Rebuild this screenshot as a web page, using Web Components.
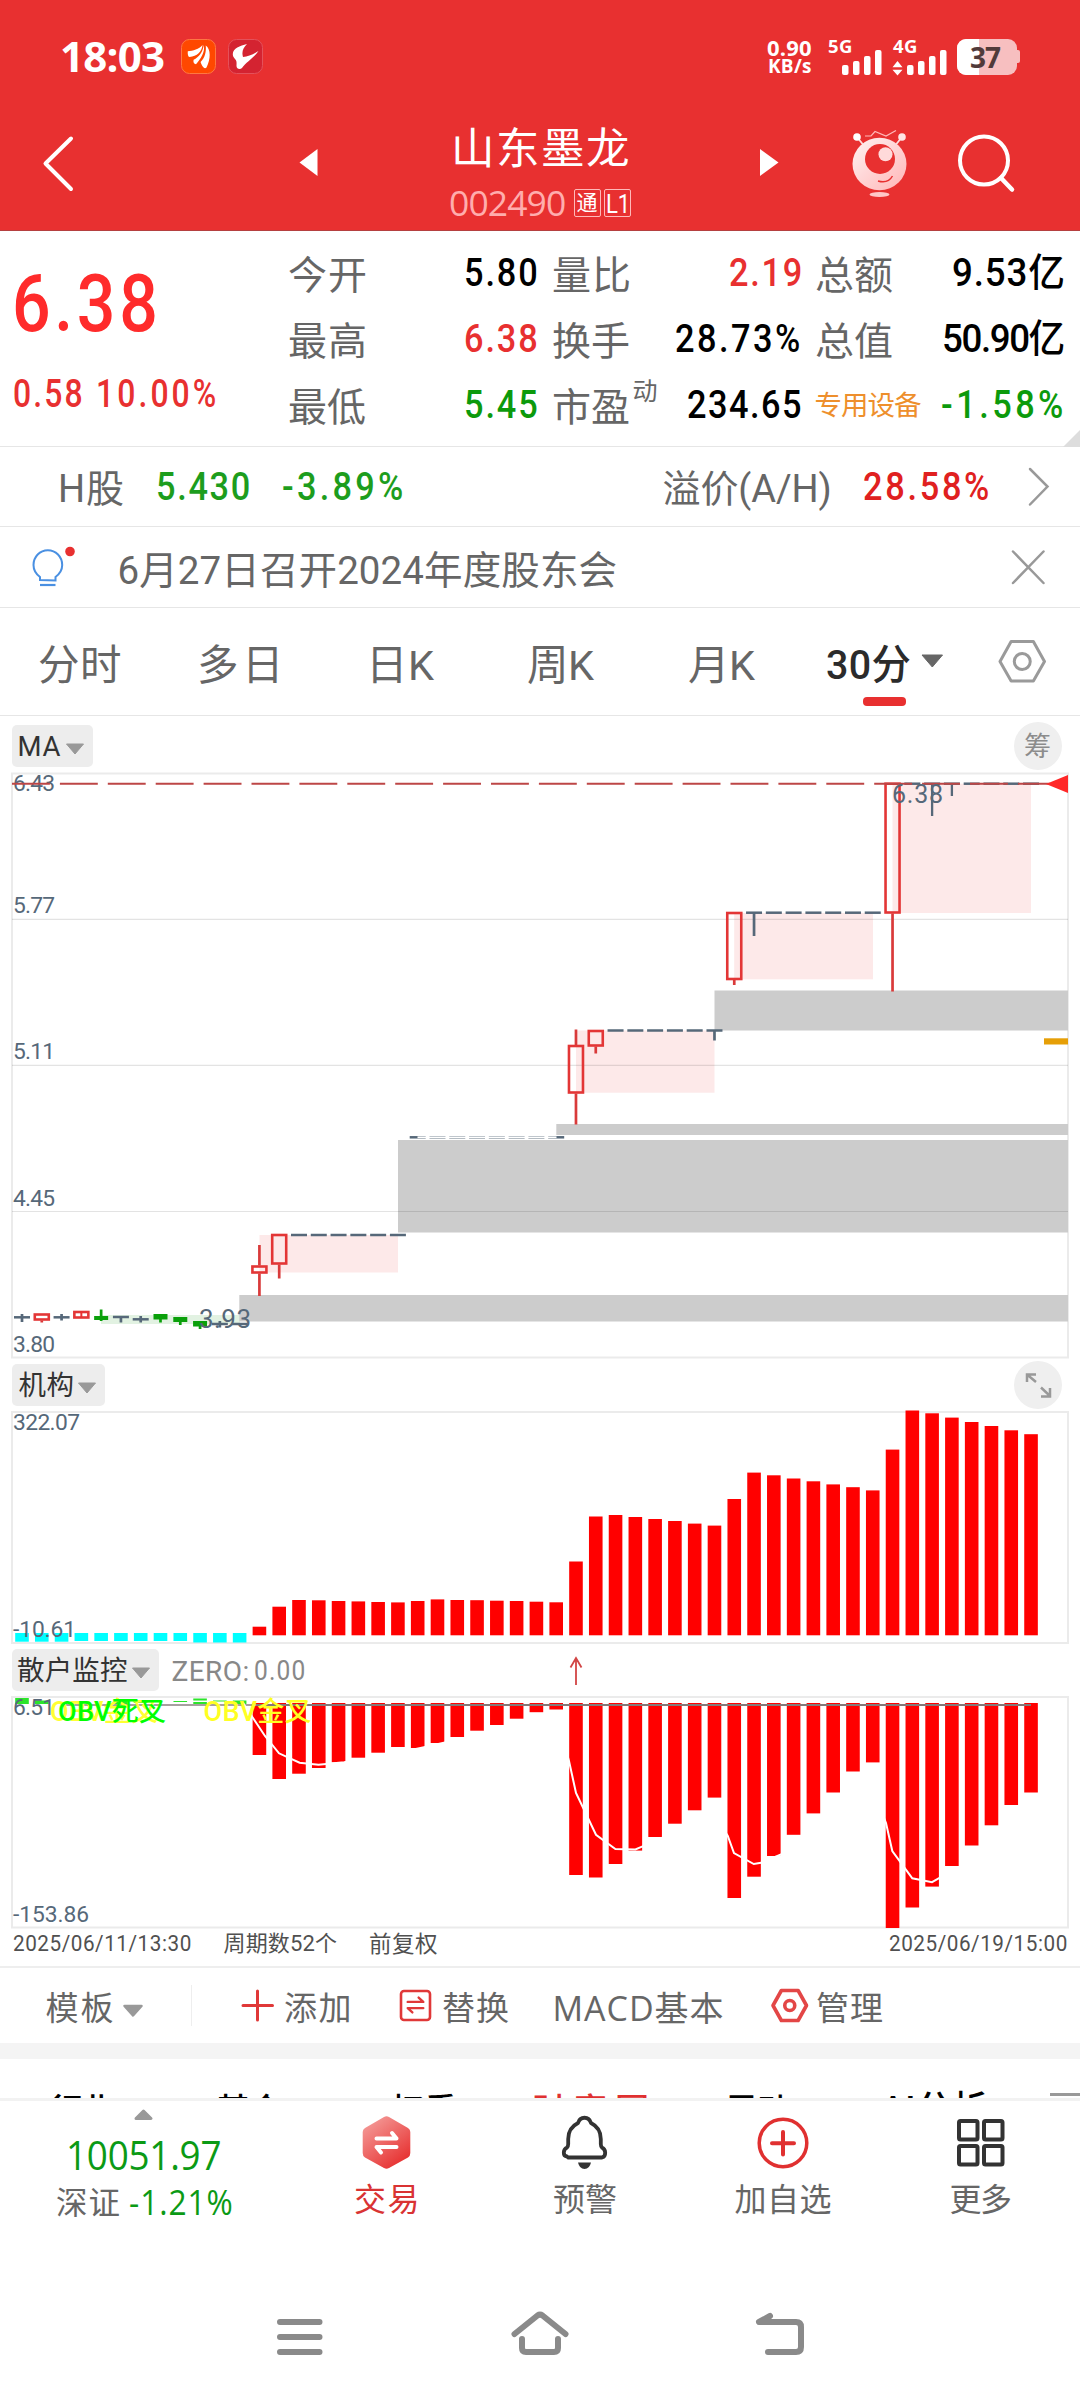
<!DOCTYPE html>
<html lang="zh-CN">
<head>
<meta charset="utf-8">
<title>山东墨龙 002490</title>
<style>
html,body{margin:0;padding:0;background:#fff}
body{width:1080px;height:2400px;overflow:hidden;font-family:Roboto,"Noto Sans CJK SC",sans-serif;color:#666}
</style>
</head>
<body>
<stock-page></stock-page>
<script>
const pen = document.createElement('canvas').getContext('2d');

/* Text whose ink spans exactly the width given in "w"; --k condenses the glyphs. */
class FitText extends HTMLElement {
  connectedCallback() {
    if (this.shadowRoot) return;
    const root = this.attachShadow({ mode: 'open' });
    root.innerHTML = '<style>:host{display:block;white-space:pre;flex:none}span{display:inline-block;transform-origin:0 50%}</style><span><slot></slot></span>';
    const text = this.textContent, w = +this.getAttribute('w');
    const cs = getComputedStyle(this);
    const k = parseFloat(cs.getPropertyValue('--k')) || 1;
    pen.font = `${cs.fontWeight} ${cs.fontSize} ${cs.fontFamily}`;
    const m = pen.measureText(text), n = [...text].length;
    const ink = m.actualBoundingBoxLeft + m.actualBoundingBoxRight;
    const span = root.querySelector('span');
    span.style.marginLeft = m.actualBoundingBoxLeft * k + 'px';
    if (k !== 1) span.style.transform = `scaleX(${k})`;
    if (n > 1) span.style.letterSpacing = ((w / k - ink) / (n - 1)) + 'px';
  }
}
customElements.define('fit-text', FitText);

/* Items of a row: left edge, width, centre, height, markup. */
const OPEN = "'Open Sans','Noto Sans CJK SC',sans-serif";
const t = (x, w, cy, size, text, css = '') => ({ x, w, cy, h: size, html: text, size, css, text: true });
const g = (x, y, w, h, inner, css = '') => ({ x, w, cy: y + h / 2, h, css,
  html: `<svg width="${w}" height="${h}" viewBox="${x} ${y} ${w} ${h}" fill="none">${inner}</svg>` });
const b = (x, y, w, h, html, css = '') => ({ x, w, cy: y + h / 2, h, html, css });
function row(top, height, items, css = '', left = 0) {
  let end = left;
  return `<div class="row" style="height:${height}px;${css}">` + items.map(i => {
    const box = `margin:${i.cy - i.h / 2 - top}px 0 0 ${i.x - end}px;width:${i.w}px;height:${i.h}px;`;
    end = i.x + i.w;
    return i.text
      ? `<fit-text w="${i.w}" style="${box}font-size:${i.size}px;line-height:${i.h}px;${i.css}">${i.html}</fit-text>`
      : `<div class="box" style="${box}${i.css}">${i.html}</div>`;
  }).join('') + '</div>';
}
const BASE = '<style>:host{display:block;flex:none}*{box-sizing:border-box}.row{display:flex;align-items:flex-start;width:100%}.box{flex:none}svg{display:block;overflow:visible}</style>';
function define(name, markup) {
  customElements.define(name, class extends HTMLElement {
    connectedCallback() {
      if (this.shadowRoot) return;
      this.attachShadow({ mode: 'open' }).innerHTML = BASE + markup;
    }
  });
}
const bars = x => [[0, 65], [11, 61], [22, 56], [33, 50]].map(([d, y]) =>
  `<rect x="${x + d}" y="${y}" width="6.5" height="${75 - y}" rx="2" fill="#fff"/>`).join('');
const B = 'color:#fff;font-weight:700;font-family:' + OPEN;

define('status-bar', '<style>:host{background:#e83030}</style>' + row(0, 100, [
  t(62, 102, 56, 42, '18:03', B),
  g(181, 39, 35, 35, '<g transform="translate(181 39)"><rect x=".5" y=".5" width="34" height="34" rx="8" fill="#ff4800" stroke="#ff7742"/><g fill="#fff"><path d="M6.8 12.2C12 12 18 10 21.5 6 21 12.500 16 17.500 8.500 18 7 17.800 6.500 15 6.800 12.200Z"/><path d="M22.700 6C24.500 13 19.500 20 15 25.200 12.800 25.200 12 23 12.600 20.800 18 18 22 13 22.700 6Z"/><path d="M24.700 6.500C30 10 29.800 20 25.500 28.500 23 31 20.500 26 19.600 23 24 19 25.500 12 24.700 6.500Z"/></g></g>'),
  g(228, 39, 35, 35, '<g transform="translate(228 39)"><rect x=".5" y=".5" width="34" height="34" rx="8" fill="#d42331" stroke="#e4515b"/><path fill="#fff" d="M4.800 15C5 9 12 7 19 5 15 9 13.500 13 15 18 20 18 26 15 30.500 12 26 19 18 23 14 29 12 31 8.500 30 8.500 27 8.500 24 9 22 7 20 5.500 18.500 4.700 17 4.800 15Z"/></g>'),
  b(767, 36, 44, 42, row(36, 22, [t(767, 44, 46.500, 22, '0.90', B)], '', 767) + row(58, 20, [t(769, 42, 66.500, 19, 'KB/s', B)], '', 767)),
  t(828, 23, 46, 18.500, '5G', B),
  g(852, 39, 31, 36, bars(842)),
  t(893, 23, 46, 18.500, '4G', B),
  g(917, 39, 30, 36, bars(907) + '<path d="M892.500 67.300 897.500 61 902.500 67.300ZM892.500 69.700 897.500 75.500 902.500 69.700Z" fill="#fff"/>'),
  g(957, 39, 13, 36, '<rect x="957" y="39" width="60" height="36" rx="9" fill="#f7bfc0"/><path d="M979 39H966A9 9 0 0 0 957 48V66A9 9 0 0 0 966 75H979Z" fill="#fff"/><path d="M1017 50h1a2 2 0 0 1 2 2v9a2 2 0 0 1-2 2h-1Z" fill="#f7bfc0"/>'),
  t(971, 30, 56.500, 28, '37', B + ';color:#513a3a;position:relative'),
]));

define('title-bar', '<style>:host{background:#e83030;border-bottom:1px solid #b54040}</style>' + row(100, 130, [
  g(40, 133, 36, 60, '<path d="M71 138.500 45.500 163.500 71 189" stroke="#fff" stroke-width="4" stroke-linecap="round" stroke-linejoin="round"/>'),
  g(299, 148, 20, 30, '<path d="M299.500 162.500 317.500 149V176Z" fill="#fff"/>'),
  b(449, 124, 181, 94,
    row(124, 60, [t(455, 173, 149.500, 43.500, '山东墨龙', 'color:#fff')], '', 449) +
    row(184, 34, [
      t(450, 115, 202.500, 35.500, '002490', 'color:#ffadad;font-family:' + OPEN),
      b(573.500, 189, 27, 28, row(190, 26, [t(576.500, 20.500, 203.500, 21, '通', 'color:#fff')], '', 574.500), 'border:1px solid #ffb9b9;border-radius:2px'),
      b(603.500, 189, 27, 28, row(190, 26, [t(607.500, 18.500, 203.500, 26, 'L1', 'color:#fff;--k:.85')], '', 604.500), 'border:1px solid #ffb9b9;border-radius:2px')
    ], '', 449)),
  g(759, 148, 20, 30, '<path d="M778.500 162.500 760 149V176Z" fill="#fff"/>'),
  g(850, 128, 58, 70, '<defs><linearGradient id="r" x1="0" y1="0" x2="1" y2="1"><stop offset="0" stop-color="#fff3f3"/><stop offset="1" stop-color="#ffb5b6"/></linearGradient></defs><path d="M857 137 865 147M902 137 894 147" stroke="#ffdede" stroke-width="1.800"/><circle cx="857" cy="137" r="3.800" fill="#fff"/><circle cx="902" cy="137" r="3.800" fill="#ffe5e5"/><path d="M865 136H871L875 131.500 886 136 896 130.500" stroke="#ffb9b9" stroke-width="1.200"/><ellipse cx="879.500" cy="164" rx="27" ry="26.300" fill="url(#r)"/><circle cx="880" cy="159" r="15" fill="#e83030"/><circle cx="885.500" cy="154.300" r="7" fill="#ffdada"/><path d="M878 181Q888 184 892.500 176" stroke="#e83030" stroke-width="1.500"/><ellipse cx="879.500" cy="194.500" rx="10" ry="2.500" fill="#ffc7c7"/>'),
  g(956, 132, 60, 62, '<ellipse cx="984" cy="160.500" rx="24" ry="24" stroke="#fff" stroke-width="4"/><path d="M1001 178 1012 189.500" stroke="#fff" stroke-width="4.500" stroke-linecap="round"/>')
]));

const R = '#e83030', K = '#000', G = '#0c9a0c';
const v = (x, w, cy, s, c) => t(x, w, cy + 1.500, 39, s, `font-weight:500;color:${c};--k:${s.endsWith('亿') ? .94 : .88}`);
const lab = (x, cy, s) => t(x, 76, cy + 3.500, 39, s);
define('quote-panel', '<style>:host{border-bottom:1px solid #e6e6e6;display:flex;background:#fff}.l{width:280px}.r{width:800px}</style><div class="l">' +
  row(231, 120, [t(15.500, 139, 304.500, 79, '6.38', 'font-weight:500;color:#ff2b2b;--k:.86')]) +
  row(351, 95, [t(13.500, 67.500, 393.500, 38, '0.58', 'font-weight:500;--k:.84;color:' + R), t(98.500, 117, 393.500, 38, '10.00%', 'font-weight:500;--k:.84;color:' + R)]) +
  '</div><div class="r">' +
  row(231, 75, [lab(289, 272.500, '今开'), v(466, 71, 272, '5.80', K), lab(553, 272.500, '量比'), v(729.500, 70.500, 272, '2.19', R), lab(816, 272.500, '总额'), v(953, 110, 272, '9.53亿', K)], '', 280) +
  row(306, 65, [lab(289, 338.500, '最高'), v(466, 71, 338, '6.38', R), lab(553, 338.500, '换手'), v(675.500, 123, 338, '28.73%', K), lab(816, 338.500, '总值'), v(943.500, 119.500, 338, '50.90亿', K)], '', 280) +
  row(371, 75, [lab(289, 404.500, '最低'), v(466, 71, 404, '5.45', G), lab(553, 404.500, '市盈'), t(633.500, 24, 391.500, 25, '动'), v(687.500, 112.500, 404, '234.65', K), t(815.500, 105.500, 406, 27.500, '专用设备', 'color:#ee8f2c'), v(941.500, 120, 404, '-1.58%', G), g(1063, 430, 17, 17, '<path d="M1063 447 1080 430V447Z" fill="#ddd"/>')], '', 280) + '</div>');

define('h-share-row', '<style>:host{border-bottom:1px solid #e6e6e6}</style>' + row(447, 79, [
  t(61, 62, 488.500, 38, 'H股'), v(157.500, 91.500, 485.500, '5.430', '#1d9d1d'), v(283, 119, 485.500, '-3.89%', '#1d9d1d'),
  t(663.500, 166, 488.500, 38, '溢价(A/H)'), v(864, 124, 485.500, '28.58%', '#e02020'),
  g(1027, 466, 24, 42, '<path d="M1030 469 1047.500 486.500 1030 504.500" stroke="#999" stroke-width="2.500" stroke-linecap="round"/>')
]));

define('notice-row', '<style>:host{border-bottom:1px solid #e6e6e6}</style>' + row(527, 80, [
  g(30, 544, 48, 46, '<path d="M40 580V577C36 574 33.500 569 33.500 565A14.300 14.800 0 0 1 62.200 565C62.200 569 59.500 574 55.500 577V580.500Z" stroke="#4a90e2" stroke-width="2"/><path d="M40 585H55.500" stroke="#4a90e2" stroke-width="2.200"/><circle cx="70" cy="551.500" r="4.800" fill="#e83030"/>'),
  t(119.500, 497, 571, 38.500, '6月27日召开2024年度股东会'),
  g(1010, 549, 36, 36, '<path d="M1013 551.500 1043.500 583M1043.500 551.500 1013 583" stroke="#999" stroke-width="2.500" stroke-linecap="round"/>')
]));

const hex = (x1, x2, y1, y2, cy, r, c, sw) => { const k = (x2 - x1) / 4; return `<path d="M${x1 + k} ${y1}H${x2 - k}L${x2} ${cy} ${x2 - k} ${y2}H${x1 + k}L${x1} ${cy}Z" stroke="${c}" stroke-width="${sw}" stroke-linejoin="round"/><circle cx="${(x1 + x2) / 2}" cy="${cy}" r="${r}" stroke="${c}" stroke-width="${sw}"/>`; };
define('period-tabs', '<style>:host{border-bottom:1px solid #e6e6e6}</style>' + row(608, 107, [
  t(39, 81, 665.500, 41.500, '分时'), t(200, 77, 665.500, 41.500, '多日'), t(373, 62, 665.500, 41.500, '日K'), t(528, 67, 665.500, 41.500, '周K'), t(689, 67, 665.500, 41.500, '月K'),
  b(826, 640, 85, 70, row(640, 57, [t(826.500, 83, 665.500, 41, '30分', 'color:#2b2b2b;font-weight:500;--k:.96')], '', 826) + row(697, 13, [b(863, 697, 43, 9, '', 'background:#e83030;border-radius:4px')], '', 826)),
  g(921, 654, 23, 15, '<path d="M922 655H942.500L932.300 667Z" fill="#666" stroke="#666" stroke-linejoin="round"/>'),
  g(998, 638, 48, 46, hex(1000, 1044.500, 641.500, 681, 661.500, 8, '#9a9a9a', 3))
]));

const chip = (y, w, x, tw, text) => b(12, y, w, 42, row(y, 42, [t(x, tw, y + 22, 27.500, text, 'color:#333'), g(x + tw + 4, y + 18, 19, 12, `<path d="M${x + tw + 5.500} ${y + 19}h17l-8.500 10Z" fill="#999" stroke="#999" stroke-linejoin="round"/>`)], '', 12), 'background:#ededed;border-radius:5px');
const round = (y, inner) => b(1014, y, 48, 48, inner, 'background:#efefef;border-radius:50%');
define('main-head', row(716, 56, [chip(725, 81, 19.500, 41, 'MA'), round(722, row(722, 48, [t(1025, 26, 747, 27, '筹', 'color:#8c8c8c')], '', 1014))]));
define('fund-head', row(1359, 52, [chip(1364, 93, 18.500, 54, '机构'), round(1361, '<svg width="48" height="48" viewBox="1014 1361 48 48"><path d="M1036 1382 1027 1374.500M1027 1382V1374.500H1036M1041 1387.500 1050 1396M1041 1396.500H1050V1388" fill="none" stroke="#999" stroke-width="2.500"/></svg>')]));
define('retail-head', row(1644, 52, [chip(1649, 147, 18, 109, '散户监控'),
  t(172.500, 75, 1671.500, 28, 'ZERO:', 'color:#888'), t(254.500, 49.500, 1671.500, 28.500, '0.00', 'color:#888;--k:.86'),
  g(569, 1654, 14, 33, '<path d="M576 1685V1658M570.500 1667.500 576 1658 581.500 1667.500" stroke="#d24545" stroke-width="1.800"/>')]));

/* Chart pieces, in page units. */
const X = i => 22 + 19.785 * i, INK = '#566879', SW = 2.700;
const rect = (x, y, x2, y2, f) => `<rect x="${x}" y="${y}" width="${x2 - x}" height="${y2 - y}" fill="${f}"/>`;
const label = (x, base, w, s, size = 22.800, c = INK) => `<text x="${x}" y="${base}" textLength="${w}" font-size="${size}" fill="${c}">${s}</text>`;
const line = (x, y, x2, y2, c, w = 2) => `<path d="M${x} ${y}L${x2} ${y2}" stroke="${c}" stroke-width="${w}"/>`;
const doji = (i, y, a = y, z = y) => line(X(i) - 8, y, X(i) + 8, y, INK, 2.500) + (a < z ? line(X(i), a, X(i), z, INK, SW) : '');
const up = (i, a, z, hi = a, lo = z) => line(X(i), hi, X(i), a, '#d93a3a', SW) + line(X(i), z, X(i), lo, '#d93a3a', SW) + `<rect x="${X(i) - 7}" y="${a + 1}" width="14" height="${z - a - 2}" stroke="#e33636" stroke-width="2.600"/>`;
const down = (i, a, z, hi, lo) => rect(X(i) - 7, a, X(i) + 7, z, '#0aa00a') + line(X(i), hi, X(i), lo, '#0aa00a', SW);
const frame = (y, y2) => `<rect x="12" y="${y}" width="1056" height="${y2 - y}" stroke="#ebebeb" stroke-width="2"/>`;
const dojis = (a, z, y) => { let s = ''; for (let i = a; i <= z; i++) s += doji(i, y); return s; };
const chart = (y, h, inner) => `<svg width="1080" height="${h}" viewBox="0 ${y} 1080 ${h}" fill="none" font-family="Roboto,'Noto Sans CJK SC',sans-serif">${inner}</svg>`;

define('candle-chart', chart(772, 587, frame(773.500, 1357.500) +
  rect(101, 1315, 240, 1324, '#e2f2e2') + rect(239.300, 1295, 1068, 1321.500, '#ccc') + rect(398, 1140, 1068, 1232.500, '#ccc') +
  rect(556.300, 1124, 1068, 1135, '#ccc') + rect(714.500, 990.500, 1068, 1030.500, '#ccc') +
  rect(259.500, 1235, 398, 1272.500, '#fde9e9') + rect(576, 1030.500, 714.500, 1092.700, '#fde9e9') +
  rect(734.200, 913, 873, 979.300, '#fde9e9') + rect(892.500, 783.700, 1031, 913, '#fde9e9') +
  [919.300, 1065.300, 1211.500].map(y => line(12, y, 1068, y, 'rgba(0,0,0,.11)', 1.200)).join('') +
  label(13, 791, 42, '6.43') + label(13, 912.500, 42, '5.77') + label(13, 1059, 42, '5.11') + label(13, 1205.500, 42, '4.45') + label(13, 1351.500, 42, '3.80') +
  doji(0, 1317.300, 1314, 1322) + up(1, 1313.500, 1320.500, 1313.500, 1322.500) + doji(2, 1317.300, 1314, 1320.500) + up(3, 1311, 1318.500) + line(X(3), 1311, X(3), 1318, '#e83030') +
  down(4, 1316, 1320, 1309.500, 1321) + doji(5, 1317, 1317, 1322.500) + doji(6, 1319.300, 1316, 1322.500) + down(7, 1314, 1319.500, 1314, 1322.500) +
  down(8, 1317, 1322, 1317, 1325) + down(9, 1321, 1326.500, 1321, 1329) + doji(10, 1324, 1321, 1327.500) + doji(11, 1324) + label(199, 1327.500, 52, '3.93', 26) +
  up(12, 1265.500, 1273.500, 1245, 1296) + up(13, 1234, 1264.500, 1234, 1278.500) + dojis(14, 19, 1235) +
  dojis(20, 27, 1137.300) + rect(417.500, 1136.400, 556.500, 1138.200, '#fff') +
  up(28, 1045, 1093.500, 1029.500, 1124.500) + up(29, 1030, 1046.500, 1030, 1053.500) + dojis(30, 34, 1030.500) + doji(35, 1030.500, 1030.500, 1040.500) +
  up(36, 912, 980, 912, 985) + doji(37, 912.700, 912.700, 936) + dojis(38, 43, 912.700) +
  up(44, 782.700, 913.500, 782.700, 991.500) + dojis(45, 51, 783.700) + line(X(46), 783, X(46), 816, INK, 2.300) + line(X(47), 783, X(47), 796, INK, 2.300) +
  '<path d="M12 783.700H1050" stroke="#bd4646" stroke-width="2" stroke-dasharray="37.900 10"/>' +
  label(892, 802.700, 51, '6.38', 25) + '<path d="M1046 784 1068 775V793Z" fill="#ff2828"/>' + rect(1044, 1038.300, 1068, 1044.500, '#e69f07')));

const flow = [1626.700,1606.700,1600,1600.300,1601,1601.400,1602,1602.400,1601,1599.400,1600,1600.200,1600.700,1601,1601.700,1602.300,1561.500,1516.500,1515,1517,1519,1521,1523.600,1525.600,1499,1472.600,1475.300,1478.500,1481.300,1484.400,1487.200,1490.400,1449.600,1410.500,1413.300,1417.600,1422,1426,1430.300,1434.200];
const retail = [1755,1779,1773.700,1768,1762.300,1757.700,1752.700,1747,1748,1743,1737,1730.700,1725,1718.700,1712.200,1709.500,1875,1877.500,1864,1850.600,1837,1823.700,1810.300,1797.600,1898,1876.700,1856,1834.800,1813.400,1792.500,1771.500,1762.400,1928,1907.500,1886.600,1866,1845.500,1825.300,1805,1792.500];
const bar = (i, a, z, c) => rect(X(i) - 6.800, a, X(i) + 6.800, z, c);
const cyan = Array.from({ length: 12 }, (_, i) => bar(i, 1633, i > 8 ? 1642.500 : i < 3 ? 1641.700 : 1641, '#0ff')).join('');
define('fund-chart', chart(1411, 233, frame(1412, 1643) + cyan + flow.map((y, i) => bar(i + 12, y, 1635.300, '#f00')).join('') +
  label(13, 1430, 67, '322.07') + label(13, 1636.700, 63, '-10.61')));
const obv = (x, s, c) => `<text x="${x}" y="1720.500" textLength="108" font-size="27" font-weight="500" fill="${c}">${s}</text>`;
define('retail-chart', chart(1696, 233, frame(1697, 1927.500) +
  [[0,1698,1704],[1,1700.500,1704],[3,1701,1702],[5,1700,1704],[6,1701,1703],[8,1701,1702],[9,1698.500,1700.500],[9,1702,1704],[10,1700.500,1701.500],[11,1700.500,1704]].map(([i, a, z]) => bar(i, a, z, '#2be52b')).join('') +
  line(66, 1705, 1031, 1705, '#8a8080', 1.600) + obv(50, 'OBV金叉', '#ff3') +
  retail.map((y, i) => bar(i + 12, 1703, y, '#f00')).join('') + line(253, 1705, 1031, 1705, '#857777', 2) +
  '<path d="M243 1703 253 1718 265 1736 279 1753.300 299.600 1762.700 318.500 1764.700 344 1762.300 378 1757 424 1747.300 500 1730 556 1713 569 1761 576 1793 596 1834.800 615.400 1849 635.400 1849.400 642 1846.600 714 1815 727.700 1835.600 734 1853 753.800 1864 761 1862.800 781 1854.500 873 1790 886 1823 892.300 1851 912.300 1878.300 932 1882.200 939.500 1878 960 1868" stroke="#fff" stroke-width="2"/>' +
  label(13, 1715, 42, '6.51') + obv(58, 'OBV死叉', '#0f0') + obv(203.500, 'OBV金叉', '#ff2') + label(13, 1922, 76, '-153.86')));

const D = 'color:#505050';
define('date-row', row(1929, 37, [t(13.500, 177, 1944, 22, '2025/06/11/13:30', D + ';--k:.94'), t(223.500, 113.500, 1944, 22, '周期数52个', D), t(370, 67, 1944, 22.500, '前复权', D), t(889.500, 177, 1944, 22, '2025/06/19/15:00', D + ';--k:.94')]));

const swap = (x, y, k, c, sw) => `<path transform="translate(${x} ${y}) scale(${k})" d="M-10 -4H10L4 -9.500M10 4H-10L-4 9.500" stroke="${c}" stroke-width="${sw}" stroke-linecap="round" stroke-linejoin="round"/>`;
define('indicator-bar', '<style>:host{border-top:2px solid #eee;border-bottom:16px solid #f4f4f4}</style>' + row(1968, 75, [
  t(46.500, 66, 2008, 33, '模板'), g(123, 2003, 21, 15, '<path d="M124.500 2006H141.500L133 2015.500Z" fill="#999" stroke="#999" stroke-width="2.500" stroke-linejoin="round"/>'),
  b(190.500, 1985, 1.500, 41, '', 'background:#eee'),
  g(241, 1989, 33, 33, '<path d="M257.500 1991V2020M243 2005.500H272.500" stroke="#e03838" stroke-width="3" stroke-linecap="round"/>'),
  t(285, 64.500, 2008, 33, '添加'),
  g(399, 1989, 33, 33, '<rect x="401" y="1991" width="29" height="29" rx="3" stroke="#e03838" stroke-width="2.600"/>' + swap(415.500, 2005, .78, '#e03838', 3)),
  t(443, 65, 2008, 33, '替换'), t(555.500, 167, 2007.500, 34, 'MACD基本', 'font-family:' + OPEN),
  g(771, 1988, 38, 36, hex(773, 806.500, 1990.500, 2020.500, 2005.500, 5, '#e34646', 3.600)),
  t(817, 65, 2008, 33, '管理')
]));
const N = 'color:#000;font-weight:500;';
define('more-tabs', '<style>:host{overflow:hidden;border-bottom:3px solid #f2f2f2}</style>' + row(2059, 39, [
  t(49, 64, 2110.500, 34, '行业', N), t(217, 66, 2110.500, 34, '基金', N), t(390, 67, 2110.500, 34, '权重', N), t(533, 114, 2110.500, 34, '财富圈', N + 'color:#e03030'), t(726, 64, 2110.500, 34, '异动', N), t(881, 106, 2109.500, 36, 'AI分析', N), b(1050, 2093, 30, 3, '', 'background:#999')
], 'overflow:hidden'));

const act = (x, w, s, c = '#666') => t(x, w, 2200, 32, s, 'color:' + c);
define('bottom-bar', row(2101, 120, [
  b(57, 2107, 176, 112, row(2107, 15, [g(134, 2108, 19, 13, '<path d="M136 2118.500 143.500 2111 151 2118.500Z" fill="#999" stroke="#999" stroke-width="3" stroke-linejoin="round"/>')], '', 57) +
    row(2122, 60, [t(68.500, 151, 2154.500, 40, '10051.97', 'color:#0b9a15;--k:.92;font-family:' + OPEN)], '', 57) +
    row(2182, 37, [t(57, 62.500, 2204, 31.500, '深证'), t(130, 101.500, 2202, 34.500, '-1.21%', 'color:#0b9a15;--k:.92;font-family:' + OPEN)], '', 57)),
  b(355, 2112, 62, 107, row(2112, 65, [g(362, 2115, 49, 55, '<defs><linearGradient id="t" x1=".1" y1="0" x2=".8" y2="1"><stop offset="0" stop-color="#f5a19e"/><stop offset="1" stop-color="#e62b2b"/></linearGradient></defs><path d="M365 2128 384 2117Q386.500 2115.500 389 2117L408 2128Q410.300 2129.500 410.300 2132V2153Q410.300 2156 408 2157.500L389 2168Q386.500 2169.500 384 2168L365 2157.500Q362.700 2156 362.700 2153V2132Q362.700 2129.500 365 2128Z" fill="url(#t)"/><path d="M376.500 2138.500H396.500L392 2133M396.500 2147H376.500L381 2152.500" stroke="#fff" stroke-width="4" stroke-linecap="round" stroke-linejoin="round"/>')], '', 355) + row(2177, 42, [act(355, 61.500, '交易', '#d93333')], '', 355)),
  b(553, 2112, 64, 107, row(2112, 65, [g(562, 2115, 45, 55, '<path d="M567 2156.500C562.500 2156 563 2149.500 567 2147.500Q568.200 2146.500 568.200 2144V2139C568.200 2131 573 2125.500 578 2123C580 2116 589 2116 591 2123C596 2125.500 600.800 2131 600.800 2139V2144Q600.800 2146.500 602 2147.500C606 2149.500 606.500 2156 602 2157.500H568Z" stroke="#333" stroke-width="3.800" stroke-linejoin="round"/><path d="M578 2162.500H591Q589.500 2169 584.500 2169T578 2162.500Z" fill="#333"/>')], '', 553) + row(2177, 42, [act(554, 62, '预警')], '', 553)),
  b(734, 2112, 97, 107, row(2112, 65, [g(756, 2116, 54, 54, '<circle cx="783" cy="2143" r="23.800" stroke="#e03030" stroke-width="3.500"/><path d="M783 2132V2154.500M772 2143.200H794" stroke="#e03030" stroke-width="4" stroke-linecap="round"/>')], '', 734) + row(2177, 42, [act(734.500, 96, '加自选')], '', 734)),
  b(950, 2112, 62, 107, row(2112, 65, [g(956, 2118, 49, 49, [[959, 2121], [984, 2121], [959, 2146], [984, 2146]].map(([x, y]) => `<rect x="${x}" y="${y}" width="18.500" height="18.500" rx="1.500" stroke="#333" stroke-width="4"/>`).join(''))], '', 950) + row(2177, 42, [act(950.500, 60.500, '更多')], '', 950))
]));
define('system-nav', row(2221, 179, [
  g(277, 2318, 46, 38, '<path d="M280 2322H319.500M280 2337H319.500M280 2352H319.500" stroke="#8a8a8a" stroke-width="6" stroke-linecap="round"/>'),
  g(511, 2310, 58, 46, '<path d="M514.500 2334 537.500 2315.500Q540 2313.800 542.500 2315.500L565.500 2334M522 2339V2348Q522 2352 526 2352H554Q558 2352 558 2348V2339" stroke="#8a8a8a" stroke-width="6" stroke-linecap="round" stroke-linejoin="round"/>'),
  g(755, 2311, 50, 45, '<path d="M770 2316 759 2322H796Q801 2322 801 2327V2347Q801 2352 796 2352H768" stroke="#8a8a8a" stroke-width="6" stroke-linecap="round" stroke-linejoin="round"/>')
]));
define('stock-page', '<style>:host{display:flex;flex-direction:column;width:1080px;height:2400px;background:#fff}</style>' +
  ['status-bar', 'title-bar', 'quote-panel', 'h-share-row', 'notice-row', 'period-tabs', 'main-head', 'candle-chart', 'fund-head', 'fund-chart', 'retail-head', 'retail-chart', 'date-row', 'indicator-bar', 'more-tabs', 'bottom-bar', 'system-nav'].map(n => `<${n}></${n}>`).join(''));
</script>
</body>
</html>
